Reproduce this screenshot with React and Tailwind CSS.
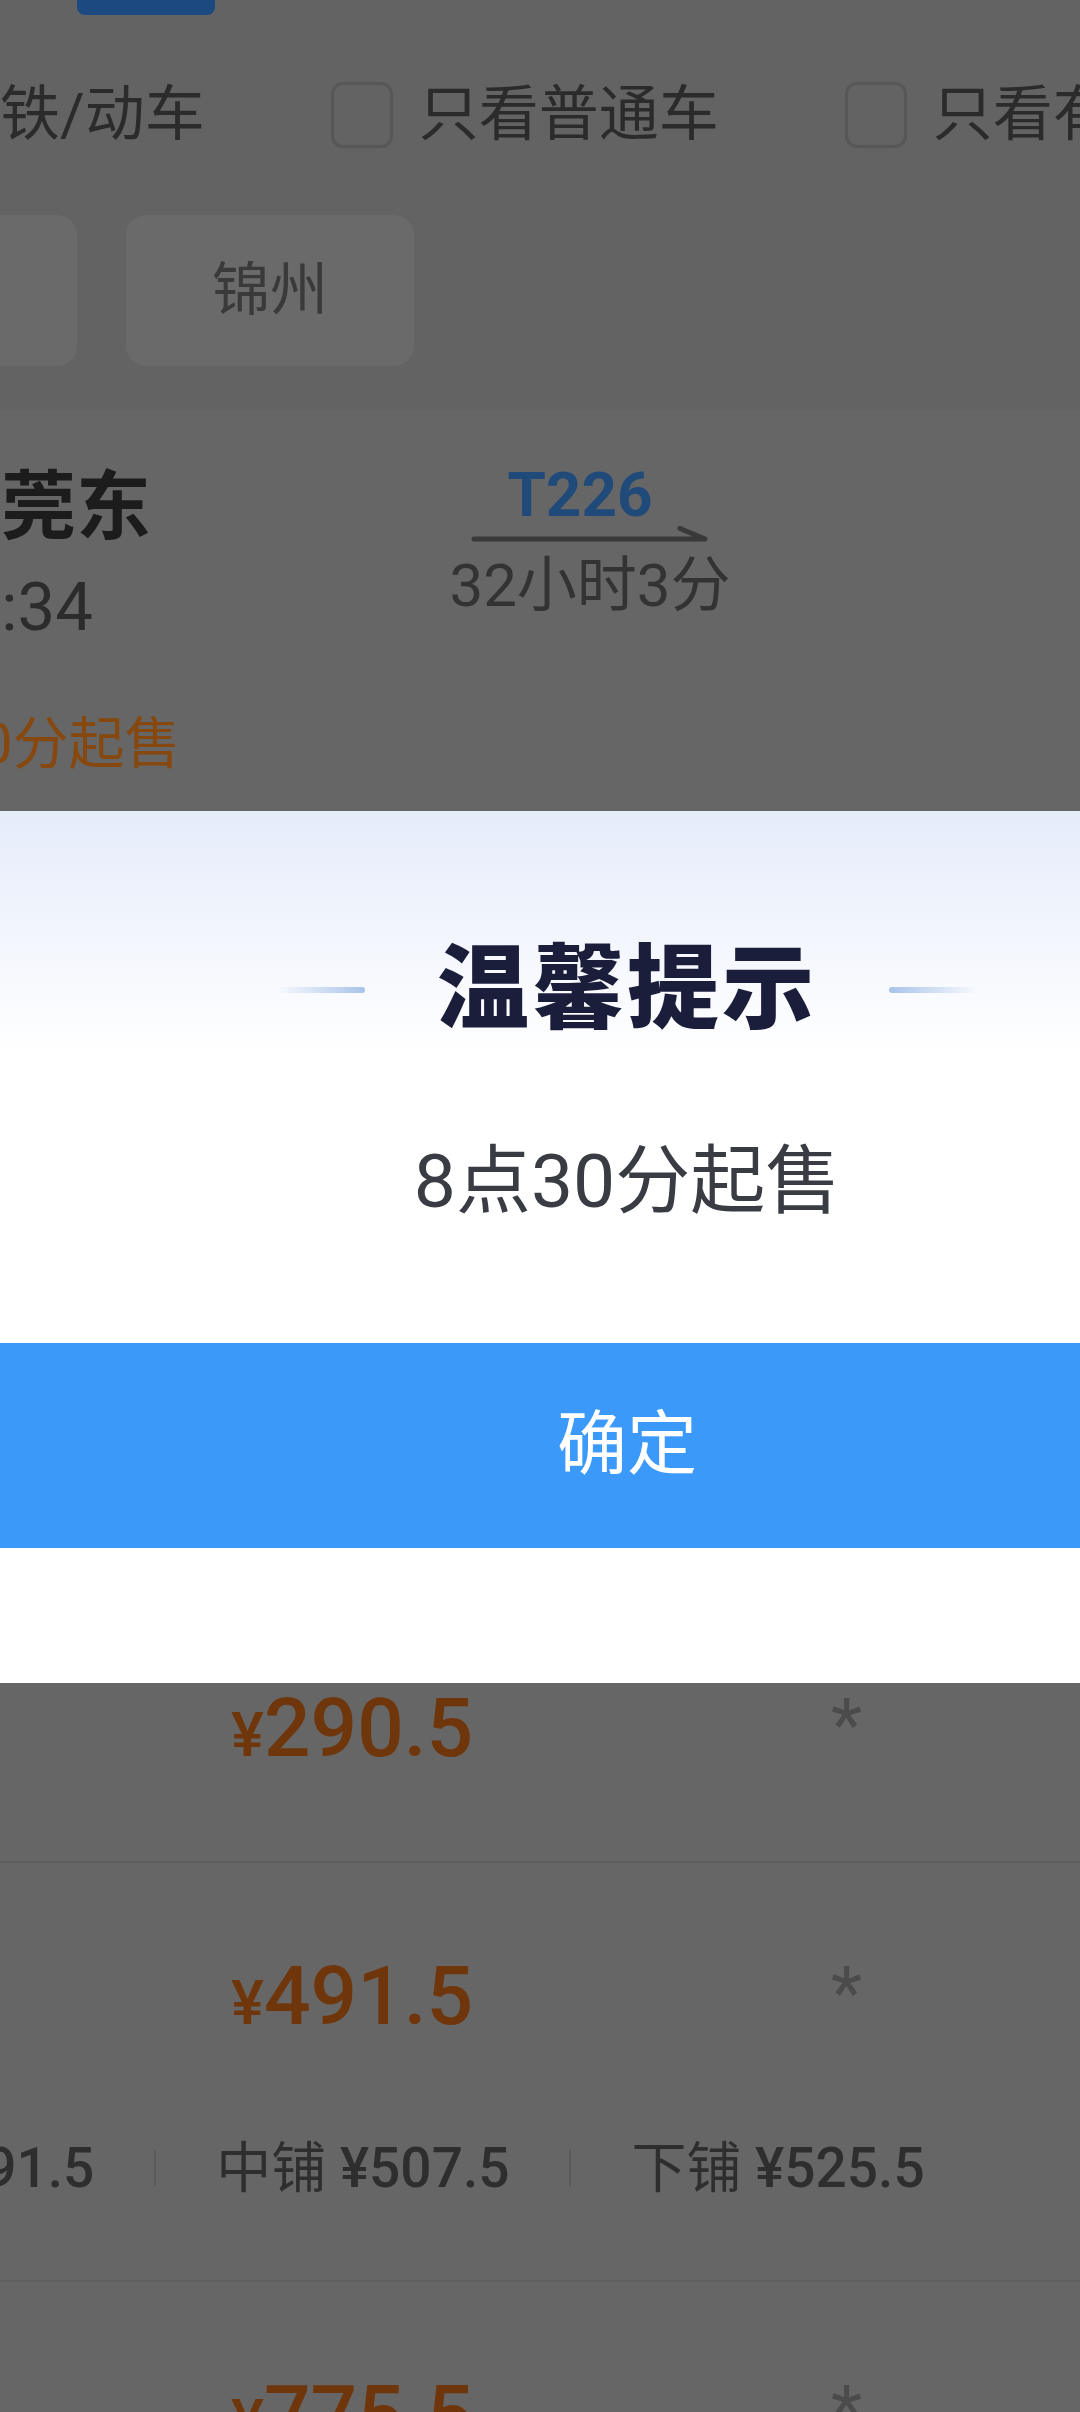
import React from 'react';

const filters = ['只看高铁/动车', '只看普通车', '只看有票'];

const berths = [
    { name: '上铺', price: '¥491.5' },
    { name: '中铺', price: '¥507.5' },
    { name: '下铺', price: '¥525.5' },
];

const PriceRow = ({ price, className, children }) => (
    <div className={`border-b-2 border-[#5e5e5e] ${className}`}>
        <div className="flex items-start pt-[85px]">
            <div className="ml-[231px] flex w-[600px] items-baseline font-medium text-[#70360b]">
                <span className="text-[62px] leading-[96px]">¥</span>
                <span className="text-[82px] leading-[96px]">{price}</span>
            </div>
            <span className="mt-[8px] text-[72px] leading-[76px] text-[#4b4b4b]">*</span>
        </div>
        {children}
    </div>
);

export default function App() {
    return (
        <div className="relative h-[2412px] w-[1080px] overflow-hidden bg-[#666666] font-[family-name:Roboto,'Noto_Sans_CJK_SC',sans-serif]">
            {/* filter bar */}
            <div className="h-[410px] bg-[#636363]">
                <div className="ml-[77px] h-[15px] w-[138px] rounded-b-[8px] bg-[#1c4a80]" />
                <div className="ml-[-268px] flex h-[200px] items-center gap-[126px] whitespace-nowrap">
                    {filters.map((f) => (
                        <label key={f} className="flex shrink-0 items-center gap-[26px]">
                            <span className="h-[66px] w-[62px] shrink-0 rounded-[12px] border-[3px] border-[#575757]" />
                            <span className="text-[60px] leading-none text-[#2b2b2b]">{f}</span>
                        </label>
                    ))}
                </div>
                <div className="ml-[-211px] flex gap-[49px]">
                    <div className="h-[151px] w-[288px] shrink-0 rounded-[20px] bg-[#6a6a6a]" />
                    <div className="flex h-[151px] w-[288px] shrink-0 items-center justify-center rounded-[20px] bg-[#6a6a6a] text-[58px] text-[#3a3a3a]">
                        锦州
                    </div>
                </div>
            </div>

            {/* train card */}
            <div className="h-[1185px]">
                <div className="flex whitespace-nowrap">
                    <div className="ml-[-74px] w-[534px] shrink-0 pt-[52px]">
                        <div className="text-[75px] font-bold leading-[90px] text-[#1c1c1c]">东莞东</div>
                        <div className="mt-[15px] text-[67px] leading-[80px] text-[#2c2c2c]">08:34</div>
                        <div className="ml-[-64px] mt-[63px] text-[56px] leading-[68px] text-[#86480f]">8点30分起售</div>
                    </div>
                    <div className="flex w-[260px] shrink-0 flex-col items-center pt-[48px]">
                        <div className="pr-[20px] text-[62px] font-bold leading-[74px] text-[#1f4a7a]">T226</div>
                        <svg className="mt-[-6px]" width="238" height="20" viewBox="0 0 238 20" fill="none">
                            <path d="M3 13H234M209 2.5L234 13" stroke="#393939" strokeWidth="5" strokeLinecap="round" />
                        </svg>
                        <div className="mt-[4px] text-[60px] leading-[72px] text-[#333333]">32小时3分</div>
                    </div>
                </div>
            </div>

            {/* seats */}
            <PriceRow price="290.5" className="h-[268px]" />
            <PriceRow price="491.5" className="h-[419px]">
                <div className="ml-[-199px] mt-[84px] flex items-center gap-[60px] whitespace-nowrap text-[55px] leading-[66px] text-[#2e2e2e]">
                    {berths.map((b, i) => (
                        <React.Fragment key={b.name}>
                            {i > 0 && <span className="h-[36px] w-[2px] shrink-0 bg-[#5a5a5a]" />}
                            <span className="shrink-0">
                                {b.name} <span className="font-medium">{b.price}</span>
                            </span>
                        </React.Fragment>
                    ))}
                </div>
            </PriceRow>
            <PriceRow price="775.5" className="h-[300px]" />

            {/* dialog */}
            <div className="absolute inset-x-0 top-[811px] h-[872px] bg-linear-to-b from-[#e5ecfa] via-white via-[28%] to-white">
                <div className="flex flex-col items-center pl-[174px] pt-[124px]">
                    <div className="flex items-center gap-[72px]">
                        <span className="h-[6px] w-[88px] rounded-full bg-linear-to-r from-transparent to-[#a8c3ea]" />
                        <h2 className="text-[92px] font-black leading-[110px] tracking-[3px] text-[#1b1e3b]">温馨提示</h2>
                        <span className="h-[6px] w-[88px] rounded-full bg-linear-to-l from-transparent to-[#a8c3ea]" />
                    </div>
                    <p className="mt-[91px] text-[75px] leading-[90px] text-[#3a3c44]">8点30分起售</p>
                </div>
                <button className="mt-[117px] h-[205px] w-full bg-[#3b99fa] pl-[174px] text-[70px] text-white">确定</button>
            </div>
        </div>
    );
}
